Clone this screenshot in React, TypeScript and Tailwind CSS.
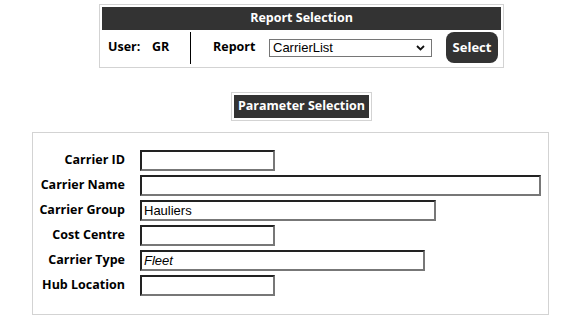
import React from 'react';

// ---------------------------------------------------------------------------
// Data
// ---------------------------------------------------------------------------

interface Param {
  label: string;
  width: string;
  value?: string;
  italic?: boolean;
}

const PARAMS: Param[] = [
  { label: 'Carrier ID', width: 'w-[135px]' },
  { label: 'Carrier Name', width: 'w-[401px]' },
  { label: 'Carrier Group', width: 'w-[296px]', value: 'Hauliers' },
  { label: 'Cost Centre', width: 'w-[135px]' },
  { label: 'Carrier Type', width: 'w-[285px]', value: 'Fleet', italic: true },
  { label: 'Hub Location', width: 'w-[135px]' },
];

// ---------------------------------------------------------------------------
// Pieces
// ---------------------------------------------------------------------------

function HeaderBar({ children }: { children: React.ReactNode }) {
  return (
    <div className="flex h-[23px] items-center justify-center bg-[#333333] text-[12.5px] font-bold text-white">
      {children}
    </div>
  );
}

function ParamRow({ label, width, value, italic }: Param) {
  return (
    <div className="flex h-[21px] items-center">
      <div className="w-[93px] pr-[1px] text-right text-[12.5px] font-bold text-black">{label}</div>
      <div
        className={`ml-[14px] flex h-[21px] items-center border-2 border-t-[#222222] border-l-[#222222] border-b-[#777777] border-r-[#777777] bg-white pl-[2px] font-['Liberation_Sans',Arial,sans-serif] text-[13px] text-black ${width} ${
          italic ? 'italic' : ''
        }`}
      >
        {value}
      </div>
    </div>
  );
}

// ---------------------------------------------------------------------------
// App
// ---------------------------------------------------------------------------

export default function App() {
  return (
    <div className="h-[324px] w-[562px] overflow-hidden bg-white pt-[4px] font-['Open_Sans',sans-serif]">
      {/* Report selection */}
      <div className="ml-[99px] w-[405px] border border-[#d3d3d3] p-[2px]">
        <HeaderBar>Report Selection</HeaderBar>
        <div className="flex h-[35px] items-center">
          <div className="flex w-[88px] pl-[6px] text-[12.5px] font-bold text-black">
            <span className="w-[44px]">User:</span>
            <span>GR</span>
          </div>
          <div className="h-[32px] w-px bg-black" />
          <span className="ml-[22px] w-[56px] text-[12.5px] font-bold text-black">Report</span>
          <div className="flex h-[18px] w-[163px] items-center justify-between border border-[#767676] bg-white pl-[3px] pr-[6px] font-['Liberation_Sans',Arial,sans-serif] text-[13px] text-black">
            <span>CarrierList</span>
            <svg width="9" height="6" viewBox="0 0 9 6" fill="none">
              <path d="M1 1 L4.5 4.5 L8 1" stroke="#111" strokeWidth="1.8" />
            </svg>
          </div>
          <button className="ml-[14px] h-[31px] w-[52px] rounded-[8px] bg-[#333333] text-[13px] font-bold text-white">
            Select
          </button>
        </div>
      </div>

      {/* Parameter selection title */}
      <div className="ml-[231px] mt-[24px] w-[141px] border border-[#d3d3d3] p-[2px]">
        <HeaderBar>Parameter Selection</HeaderBar>
      </div>

      {/* Parameters */}
      <div className="ml-[32px] mt-[11px] flex h-[183px] w-[517px] flex-col gap-[4px] border border-[#d3d3d3] pt-[17px]">
        {PARAMS.map((p) => (
          <ParamRow key={p.label} {...p} />
        ))}
      </div>
    </div>
  );
}
